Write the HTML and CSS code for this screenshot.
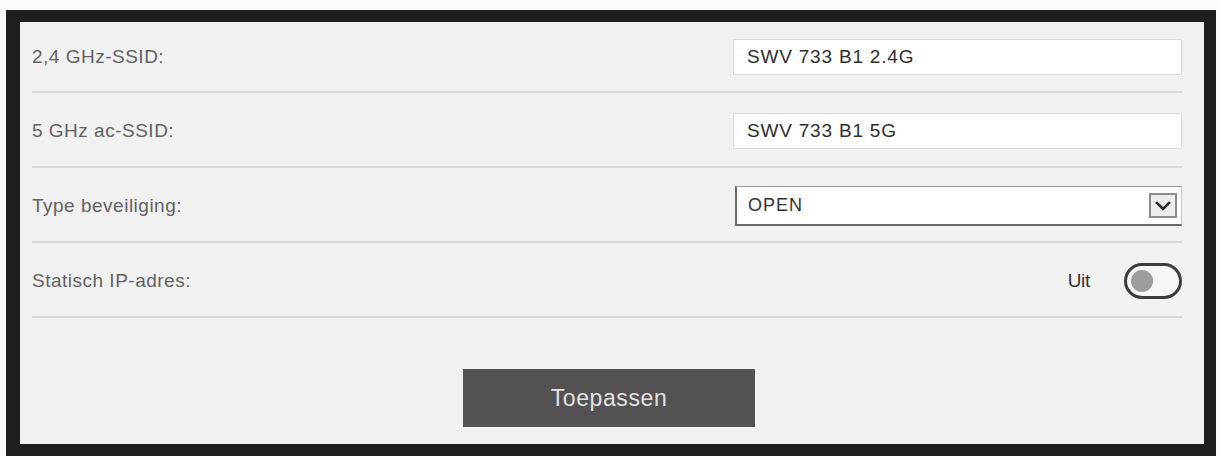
FILE: index.html
```html
<!DOCTYPE html>
<html lang="nl">
<head>
<meta charset="utf-8">
<title>Wi-Fi instellingen</title>
<link rel="stylesheet" href="styles.css">
</head>
<body>
<div class="page">
  <div class="frame">
    <form class="settings">
      <div class="row row-first">
        <label class="label">2,4 GHz-SSID:</label>
        <div class="field"><input class="text-input" type="text" value="SWV 733 B1 2.4G"></div>
      </div>
      <div class="row">
        <label class="label">5 GHz ac-SSID:</label>
        <div class="field"><input class="text-input" type="text" value="SWV 733 B1 5G"></div>
      </div>
      <div class="row">
        <label class="label">Type beveiliging:</label>
        <div class="field">
          <div class="select">
            <span class="select-value">OPEN</span>
            <span class="select-arrow">
              <svg width="16" height="10" viewBox="0 0 16 10"><path d="M2 2 L8 8 L14 2" fill="none" stroke="#2b2b2b" stroke-width="2.6" stroke-linecap="square"/></svg>
            </span>
          </div>
        </div>
      </div>
      <div class="row">
        <label class="label">Statisch IP-adres:</label>
        <div class="switch-group">
          <span class="switch-text">Uit</span>
          <span class="switch"><span class="knob"></span></span>
        </div>
      </div>
      <div class="actions">
        <button class="apply" type="button">Toepassen</button>
      </div>
    </form>
  </div>
</div>
</body>
</html>
```

FILE: styles.css
```css
html, body {
  margin: 0;
  padding: 0;
  background: #fafafa;
}

.page {
  padding: 10px 4px 0 6px;
}

.frame {
  width: 1184px;
  height: 422px;
  border-style: solid;
  border-color: #1f1d1e;
  border-width: 12px 12px 12px 14px;
  background: #f1f1f1;
}

.settings {
  padding: 0 22px 0 12px;
  font-family: "Liberation Sans", Arial, sans-serif;
}

.row {
  box-sizing: border-box;
  height: 75px;
  padding-top: 3px;
  display: flex;
  align-items: center;
  justify-content: space-between;
  border-bottom: 2px solid #d8d8d8;
}

.row-first {
  height: 71px;
  padding-top: 0;
}

.label {
  font-size: 19px;
  letter-spacing: 0.5px;
  color: #626262;
}

.field {
  width: 449px;
}

.text-input {
  box-sizing: border-box;
  width: 100%;
  height: 36px;
  margin: 0;
  padding: 0 13px;
  border: 1px solid #dcdcdc;
  background: #ffffff;
  font-family: "Liberation Sans", Arial, sans-serif;
  font-size: 19px;
  letter-spacing: 0.8px;
  color: #2e2e2e;
  outline: none;
}

.select {
  box-sizing: border-box;
  margin-left: 2px;
  height: 40px;
  display: flex;
  align-items: center;
  justify-content: space-between;
  padding: 0 4px 0 11px;
  background: #ffffff;
  border-top: 1px solid #9a9a9a;
  border-left: 2px solid #6a6a6a;
  border-bottom: 2px solid #6a6a6a;
  border-right: 1px solid #c8c8c8;
}

.select-value {
  font-size: 18px;
  letter-spacing: 1px;
  color: #333333;
}

.select-arrow {
  box-sizing: border-box;
  width: 28px;
  height: 25px;
  display: flex;
  align-items: center;
  justify-content: center;
  border: 2px solid #8c8c8c;
  background: #ededed;
}

.switch-group {
  display: flex;
  align-items: center;
  gap: 34px;
}

.switch-text {
  font-size: 19px;
  color: #333333;
  letter-spacing: -0.3px;
}

.switch {
  box-sizing: border-box;
  width: 58px;
  height: 36px;
  border: 3px solid #3c3c3c;
  border-radius: 18px;
  background: #f6f6f6;
  display: flex;
  align-items: center;
  padding-left: 4px;
}

.knob {
  width: 22px;
  height: 22px;
  border-radius: 50%;
  background: #9c9c9c;
}

.actions {
  display: flex;
  justify-content: center;
  padding-top: 51px;
}

.apply {
  width: 292px;
  height: 58px;
  margin-left: 4px;
  border: none;
  background: #545152;
  color: #e2e2e2;
  font-family: "Liberation Sans", Arial, sans-serif;
  font-size: 23px;
  letter-spacing: 0.6px;
  cursor: pointer;
}
```
